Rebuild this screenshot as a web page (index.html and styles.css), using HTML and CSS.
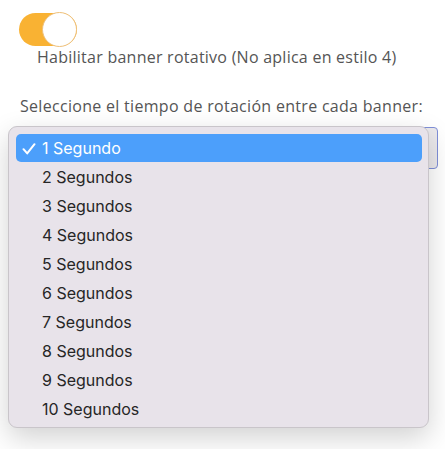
FILE: index.html
```html
<!DOCTYPE html>
<html>
<head>
<meta charset="utf-8">
<link rel="stylesheet" href="styles.css">
</head>
<body>
<div class="page">
  <div class="switch-row">
    <span class="switch"><span class="knob"></span></span>
  </div>
  <div class="toggle-label">Habilitar banner rotativo (No aplica en estilo 4)</div>
  <div class="field-label">Seleccione el tiempo de rotación entre cada banner:</div>
  <div class="select-wrap">
    <div class="select"></div>
    <ul class="menu">
      <li class="item selected"><svg class="check" width="14" height="12" viewBox="0 0 14 12"><path d="M1.5 6.2 L5.2 10.4 L12.5 1.2" fill="none" stroke="#ffffff" stroke-width="2" stroke-linecap="round" stroke-linejoin="round"/></svg>1 Segundo</li>
      <li class="item">2 Segundos</li>
      <li class="item">3 Segundos</li>
      <li class="item">4 Segundos</li>
      <li class="item">5 Segundos</li>
      <li class="item">6 Segundos</li>
      <li class="item">7 Segundos</li>
      <li class="item">8 Segundos</li>
      <li class="item">9 Segundos</li>
      <li class="item">10 Segundos</li>
    </ul>
  </div>
</div>
</body>
</html>
```
FILE: styles.css
```css
html, body {
  margin: 0;
  padding: 0;
  background: #ffffff;
}
.page {
  width: 445px;
  height: 449px;
  overflow: hidden;
  font-family: "Open Sans", sans-serif;
  color: #555555;
}
.switch-row {
  padding: 13px 0 0 19px;
  height: 33px;
}
.switch {
  display: block;
  position: relative;
  width: 58px;
  height: 33px;
  border-radius: 17px;
  background: #f9b233;
}
.knob {
  position: absolute;
  right: 0;
  top: -1px;
  width: 33px;
  height: 33px;
  border-radius: 50%;
  background: #ffffff;
  border: 1px solid #eec07a;
}
.toggle-label {
  padding-left: 37px;
  font-size: 16px;
  line-height: 22px;
  height: 22px;
  letter-spacing: 0.25px;
}
.field-label {
  margin-top: 27px;
  padding-left: 20px;
  font-size: 16px;
  line-height: 22px;
  letter-spacing: 0.3px;
}
.select-wrap {
  position: relative;
  margin-top: 10px;
  height: 44px;
}
.select {
  margin-left: 12px;
  width: 424px;
  height: 40px;
  border: 1px solid #7f8fd8;
  border-radius: 4px;
  background: #ebe9ec;
}
.menu {
  position: absolute;
  left: 8px;
  top: -1px;
  width: 421px;
  height: 302px;
  box-sizing: border-box;
  margin: 0;
  padding: 7px 6px 0 7px;
  list-style: none;
  background: #e8e3ea;
  border: 1px solid #c9c5ca;
  border-radius: 9px;
  box-shadow: 0 10px 28px rgba(0, 0, 0, 0.18);
  font-family: Inter, "Liberation Sans", sans-serif;
}
.item {
  position: relative;
  height: 29px;
  line-height: 29px;
  padding-left: 26px;
  font-size: 16px;
  color: #262626;
}
.item.selected {
  height: 28px;
  line-height: 28px;
  margin-bottom: 1px;
  background: #4c9ffb;
  border-radius: 5px;
  color: #ffffff;
}
.check {
  position: absolute;
  left: 6px;
  top: 9px;
}
```
